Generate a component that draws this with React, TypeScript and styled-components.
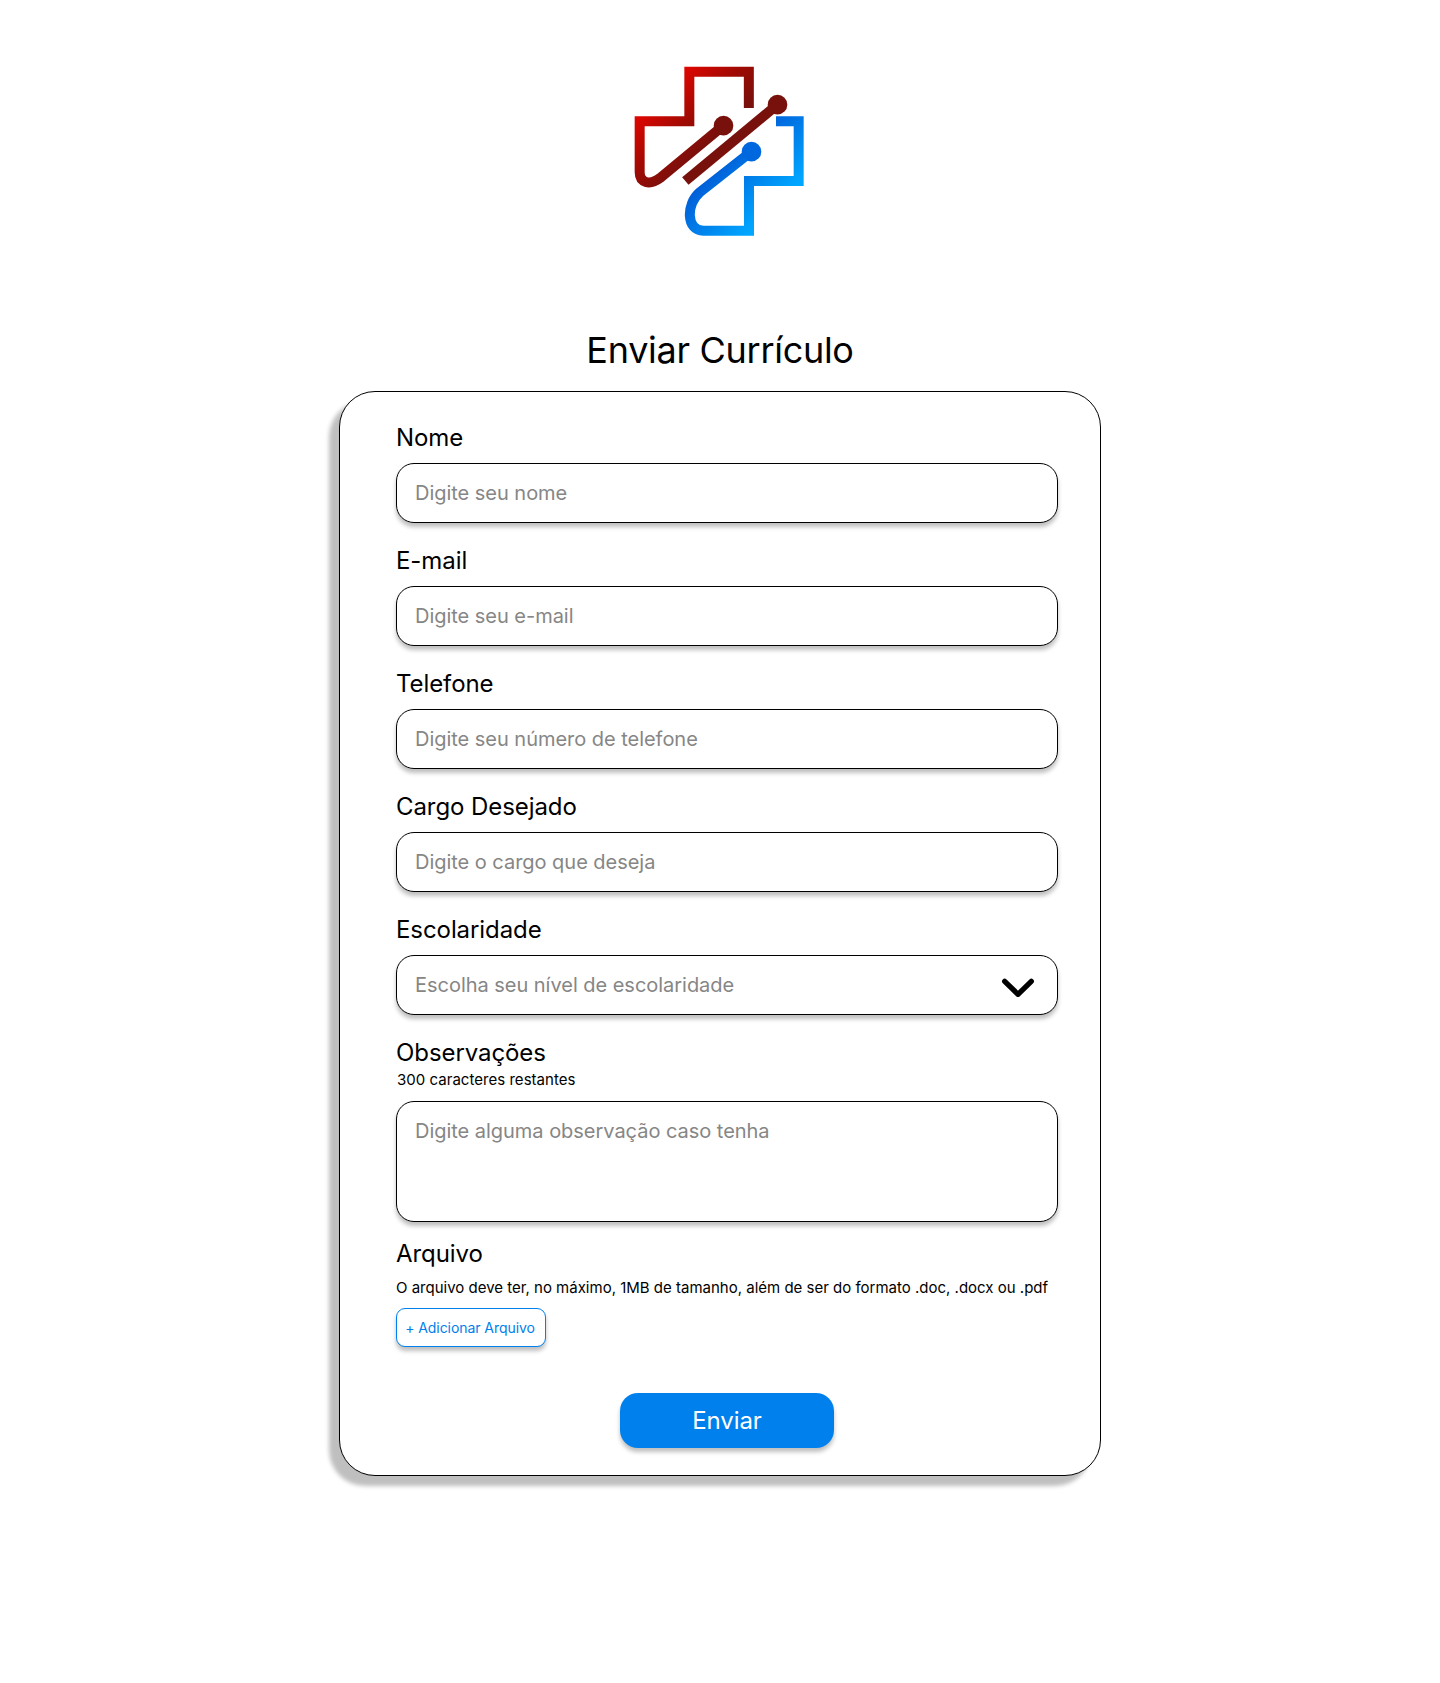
import React from 'react';
import styled, { createGlobalStyle, css } from 'styled-components';

const GlobalStyle = createGlobalStyle`
  *, *::before, *::after { box-sizing: border-box; }
  body {
    margin: 0;
    background: #fff;
    color: #000;
    font-family: Inter, 'Liberation Sans', sans-serif;
  }
`;

const Page = styled.main`
  display: flex;
  flex-direction: column;
  align-items: center;
  min-height: 1683px;
  padding-top: 50px;
`;

const Logo = styled.svg`
  display: block;
  width: 200px;
  height: 200px;
`;

const Title = styled.h1`
  margin: 78px 0 19px;
  font-size: 36px;
  line-height: 44px;
  font-weight: 400;
  letter-spacing: -0.29px;
`;

const Card = styled.form`
  display: flex;
  flex-direction: column;
  width: 762px;
  height: 1085px;
  padding: 31px 42px 0 56px;
  border: 1px solid #000;
  border-radius: 36px;
  background: #fff;
  box-shadow: -10px 10px 4px rgba(0, 0, 0, 0.25);
`;

const Field = styled.div`
  display: flex;
  flex-direction: column;
  margin-bottom: 23px;
`;

const Label = styled.label`
  height: 40px;
  font-size: 24px;
  line-height: 30px;
  letter-spacing: -0.08px;
`;

const control = css`
  width: 100%;
  border: 1px solid #000;
  border-radius: 18px;
  background: #fff;
  box-shadow: 0 4px 4px rgba(0, 0, 0, 0.25);
  font-family: inherit;
  font-size: 20px;
  line-height: 24px;
  letter-spacing: -0.03px;
  color: #000;
  outline: none;
  &::placeholder { color: #868686; opacity: 1; }
`;

const Input = styled.input`
  ${control}
  height: 60px;
  padding: 0 18px;
`;

const Select = styled.button`
  ${control}
  display: flex;
  align-items: center;
  justify-content: space-between;
  height: 60px;
  padding: 0 21px 0 18px;
  color: #868686;
  text-align: left;
`;

const Chevron = styled.svg`
  width: 36px;
  height: 22px;
  margin-top: 5px;
`;

const TextArea = styled.textarea`
  ${control}
  display: block;
  height: 121px;
  padding: 17px 18px;
  resize: none;
`;

const NotesLabel = styled(Label)`
  height: 30px;
`;

const Hint = styled.p<{ $indent?: number }>`
  margin: 0;
  padding-left: ${({ $indent = 0 }) => $indent}px;
  font-size: 15px;
  line-height: 18px;
  white-space: nowrap;
`;

const Notes = styled(Field)`
  margin-bottom: 17px;
  ${Hint} { margin: 3px 0 12px; letter-spacing: 0.03px; }
`;

const Attachment = styled.div`
  display: flex;
  flex-direction: column;
  align-items: flex-start;
  ${Label} { height: 40px; }
`;

const AddFile = styled.button`
  width: 150px;
  height: 39px;
  margin-top: 11px;
  padding: 0 2px 0 0;
  border: 1px solid #0080ed;
  border-radius: 9px;
  background: #fff;
  box-shadow: 0 4px 4px rgba(0, 0, 0, 0.25);
  color: #0080ed;
  font: 400 14px/17px Inter, sans-serif;
  letter-spacing: -0.06px;
`;

const Submit = styled.button`
  align-self: center;
  width: 214px;
  height: 55px;
  margin-top: 46px;
  padding: 0;
  border: 0;
  border-radius: 18px;
  background: #0080ed;
  box-shadow: 0 4px 4px rgba(0, 0, 0, 0.25);
  color: #fff;
  font: 400 24px/29px Inter, sans-serif;
  letter-spacing: -0.1px;
`;

const fields = [
  { id: 'nome', label: 'Nome', placeholder: 'Digite seu nome' },
  { id: 'email', label: 'E-mail', placeholder: 'Digite seu e-mail' },
  { id: 'telefone', label: 'Telefone', placeholder: 'Digite seu número de telefone' },
  { id: 'cargo', label: 'Cargo Desejado', placeholder: 'Digite o cargo que deseja' },
];

function BrandMark() {
  return (
    <Logo viewBox="0 0 600 600" fill="none" aria-hidden="true">
      <defs>
        <linearGradient id="red" gradientUnits="userSpaceOnUse" x1="120" y1="120" x2="275" y2="275">
          <stop offset="0" stopColor="#e30500" />
          <stop offset="0.55" stopColor="#a00a03" />
          <stop offset="1" stopColor="#78100c" />
        </linearGradient>
        <linearGradient id="blue" gradientUnits="userSpaceOnUse" x1="325" y1="325" x2="465" y2="465">
          <stop offset="0" stopColor="#0060d9" />
          <stop offset="1" stopColor="#00a6ff" />
        </linearGradient>
      </defs>
      <g strokeWidth="30">
        <path stroke="url(#red)" d="M386.500 174V65.500H208V214H59V367C59 397 88 408 120 384L310 227" />
        <path stroke="#78100c" d="M196 393L472 164" />
        <path stroke="url(#blue)" d="M468 214H536V393H387V542H250C198 542 198 462 239 427L394 305" />
      </g>
      <circle cx="310.500" cy="227" r="29.500" fill="#78100c" />
      <circle cx="472.500" cy="164" r="29.500" fill="#78100c" />
      <circle cx="394.500" cy="305" r="29.500" fill="#0068df" />
    </Logo>
  );
}

export default function App() {
  return (
    <>
      <GlobalStyle />
      <Page>
        <BrandMark />
        <Title>Enviar Currículo</Title>
        <Card onSubmit={(e: React.FormEvent) => e.preventDefault()}>
          {fields.map((f) => (
            <Field key={f.id}>
              <Label htmlFor={f.id}>{f.label}</Label>
              <Input id={f.id} placeholder={f.placeholder} />
            </Field>
          ))}
          <Field>
            <Label htmlFor="escolaridade">Escolaridade</Label>
            <Select id="escolaridade" type="button">
              Escolha seu nível de escolaridade
              <Chevron viewBox="0 0 36 22" fill="none" aria-hidden="true">
                <path d="M4.700 4.300L18 17.300L31.300 4.300" stroke="#000" strokeWidth="5.300" strokeLinecap="round" strokeLinejoin="round" />
              </Chevron>
            </Select>
          </Field>
          <Notes>
            <NotesLabel htmlFor="observacoes">Observações</NotesLabel>
            <Hint $indent={1}>300 caracteres restantes</Hint>
            <TextArea id="observacoes" maxLength={300} placeholder="Digite alguma observação caso tenha" />
          </Notes>
          <Attachment>
            <Label as="span">Arquivo</Label>
            <Hint>O arquivo deve ter, no máximo, 1MB de tamanho, além de ser do formato .doc, .docx ou .pdf</Hint>
            <AddFile type="button">+ Adicionar Arquivo</AddFile>
          </Attachment>
          <Submit type="submit">Enviar</Submit>
        </Card>
      </Page>
    </>
  );
}
